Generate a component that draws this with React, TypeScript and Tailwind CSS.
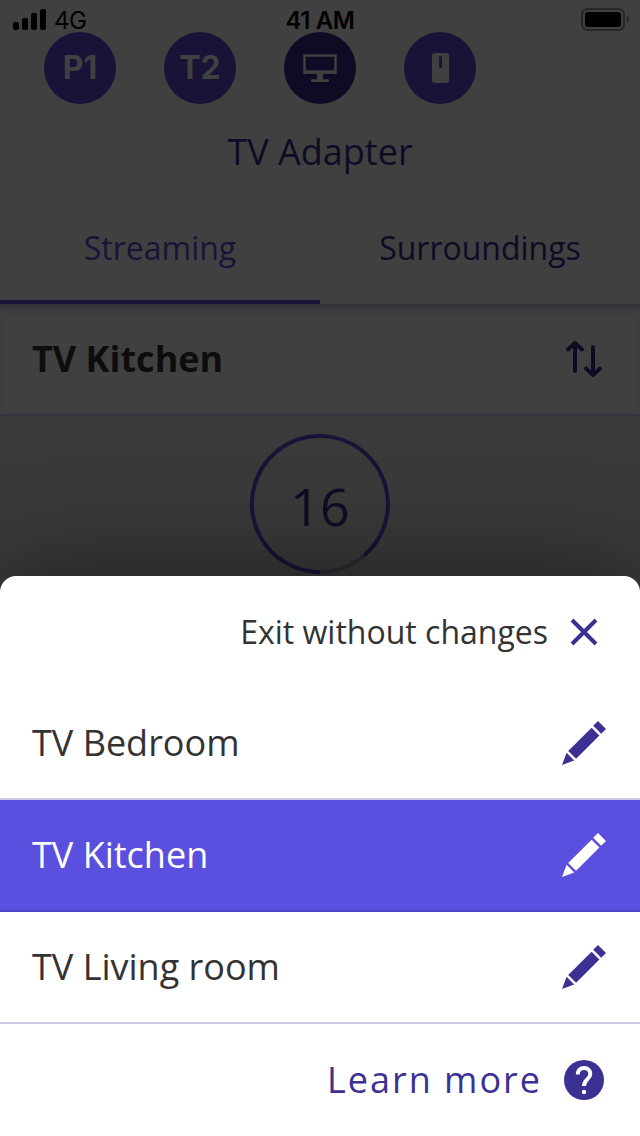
import React, { useState } from 'react'

/** Five-bar pencil used on every row of the sheet */
const PencilIcon: React.FC = () => (
  <svg width="44" height="44" viewBox="0 0 44 44" fill="currentColor">
    <path d="M36 0 44 8 39.2 12.8 31.2 4.8Z" />
    <path d="M29.6 6.7 37.4 14.4 14.1 37.7 6.2 29.9Z" />
    <path d="M4.6 31.8 12.2 39.4 0 44Z" />
  </svg>
)

const SortIcon: React.FC = () => (
  <svg width="40" height="40" viewBox="0 0 40 40" fill="none" stroke="currentColor" strokeWidth="4" strokeLinecap="round" strokeLinejoin="round">
    <path d="M11 32V4M4 10.5 11 4l7 6.5" />
    <path d="M29 8v28M22 29.5l7 6.5 7-6.5" />
  </svg>
)

const StatusBar: React.FC = () => (
  <div className="flex h-8 items-start justify-between font-['Inter',sans-serif] text-2xl leading-[42px] text-black">
    <div className="flex w-60 pl-[13px]">
      <svg className="mt-[9px]" width="33" height="21" viewBox="0 0 33 21">
        <rect y="13" width="6" height="8" rx="2" />
        <rect x="9" y="9" width="6" height="12" rx="2" />
        <rect x="18" y="4" width="6" height="17" rx="2" />
        <rect x="27" width="6" height="21" rx="2" />
      </svg>
      <span className="ml-2 tracking-[-0.5px]">4G</span>
    </div>
    <span className="font-semibold tracking-[-0.4px]">41 AM</span>
    <div className="flex w-60 justify-end pr-[11px]">
      <svg className="mt-2" width="48" height="23" viewBox="0 0 48 23">
        <rect x="1" y="1" width="42" height="21" rx="5.5" fill="none" stroke="#262626" strokeWidth="2" />
        <rect x="4" y="4" width="36" height="15" rx="3" />
        <path d="M46 7.5c2.6 1.5 2.6 6.5 0 8Z" fill="#262626" />
      </svg>
    </div>
  </div>
)

const Programs: React.FC = () => {
  const circle = 'flex size-[72px] items-center justify-center rounded-full'
  return (
    <div className="flex gap-12 pl-11 font-['Inter',sans-serif] text-[32px] font-bold text-[#404040]">
      <div className={`${circle} bg-[#1a1338]`}>P1</div>
      <div className={`${circle} bg-[#1a1338]`}>T2</div>
      <div className={`${circle} bg-[#0f0b25]`}>
        <svg width="36" height="30" viewBox="0 0 36 30" fill="none" stroke="currentColor" strokeWidth="2">
          <path d="M2.5 2.5h31v17h-31Z" strokeWidth="2.4" />
          <path d="M2 19h32" strokeWidth="3.5" />
          <path d="M18 19v9" strokeWidth="6" />
          <path d="M9 27.6h18" strokeWidth="2.6" />
        </svg>
      </div>
      <div className={`${circle} bg-[#1a1338]`}>
        <svg width="17" height="30" viewBox="0 0 17 30">
          <rect width="17" height="30" rx="3" fill="currentColor" />
          <rect x="7" y="3" width="3" height="12" rx="1.5" fill="#1a1338" />
        </svg>
      </div>
    </div>
  )
}

const VolumeDial: React.FC<{ value: number }> = ({ value }) => (
  <div className="relative mx-auto mt-[18px] size-[140px]">
    <svg width="140" height="140" viewBox="0 0 140 140" fill="none" strokeWidth="4">
      <path d="M70 138A68 68 0 0 0 114.2 121.6" stroke="#2d2c32" />
      <path d="M70 138A68 68 0 1 1 114.2 121.6" stroke="#1a1338" />
    </svg>
    <span className="absolute inset-0 flex items-center justify-center pt-1 text-[52px] leading-none text-[#0f0b25]">
      {value}
    </span>
  </div>
)

const sources = ['TV Bedroom', 'TV Kitchen', 'TV Living room']

export default function App() {
  const [selected, setSelected] = useState('TV Kitchen')

  return (
    <div className="relative h-[1136px] w-[640px] overflow-hidden bg-[#3a3a3a] font-['Open_Sans','Noto_Sans',sans-serif]">
      <header className="h-[304px] bg-[#404040]">
        <StatusBar />
        <Programs />
        <h1 className="h-[102px] pt-[26px] text-center text-4xl leading-[44px] text-[#0f0b25]">TV Adapter</h1>
        <nav className="flex h-[98px] text-[32px] leading-[84px]">
          <div className="w-1/2 border-b-4 border-[#1a1338] text-center text-[#1a1338]">Streaming</div>
          <div className="w-1/2 text-center text-[#0f0b25]">Surroundings</div>
        </nav>
      </header>

      <div className="flex h-28 items-center justify-between border-b-2 border-[#36343c] bg-[#404040] pr-9 pl-8 text-[#0f0b25] shadow-[inset_0_8px_10px_-5px_#302e3a]">
        <span className="text-4xl font-bold text-[#0d0d0d]">{selected}</span>
        <SortIcon />
      </div>
      <VolumeDial value={16} />

      {/* Source picker */}
      <section className="absolute inset-x-0 bottom-0 h-[560px] rounded-t-2xl bg-white text-[#333] shadow-[0_0_100px_rgba(0,0,0,0.5)]">
        <button className="flex h-28 w-full items-center justify-end gap-[22px] pr-[42px] text-[32px]">
          Exit without changes
          <svg className="text-[#3b3192]" width="28" height="28" viewBox="0 0 28 28" fill="none" stroke="currentColor" strokeWidth="4">
            <path d="m2 2 24 24M26 2 2 26" />
          </svg>
        </button>
        {sources.map((name) => (
          <div
            key={name}
            onClick={() => setSelected(name)}
            className={`flex h-28 items-center justify-between border-b-2 pr-[34px] pl-8 ${
              name === selected ? 'border-[#4e43c8] bg-[#5b4fdf] text-white' : 'border-[#cbc8e6]'
            }`}
          >
            <span className="text-4xl">{name}</span>
            <span className={name === selected ? 'text-white' : 'text-[#3b3192]'}>
              <PencilIcon />
            </span>
          </div>
        ))}
        <div className="flex h-28 items-center justify-end gap-[22px] pr-9 text-4xl tracking-[2px] text-[#3b3192]">
          Learn more
          <svg width="40" height="40" viewBox="0 0 40 40">
            <circle cx="20" cy="20" r="20" fill="currentColor" />
            <path d="M13.7 14.5c0-4 2.7-6.6 6.4-6.6s6.2 2.6 6.2 6c0 5.1-6.3 5.6-6.3 12.1" fill="none" stroke="#fff" strokeWidth="4" />
            <circle cx="20" cy="32" r="2.2" fill="#fff" />
          </svg>
        </div>
      </section>
    </div>
  )
}
